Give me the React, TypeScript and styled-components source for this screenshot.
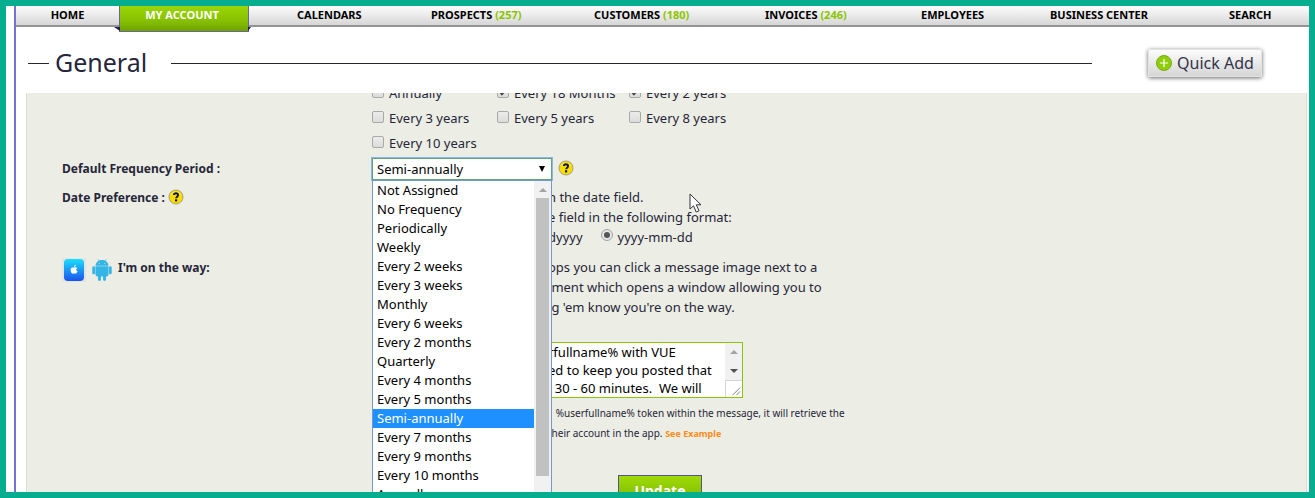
import React from 'react';
import styled, { createGlobalStyle } from 'styled-components';

const GlobalStyle = createGlobalStyle`
  *, *::before, *::after { box-sizing: border-box; }
  body { margin: 0; }
  body, button, select, textarea, input { font-family: "Noto Sans", "Open Sans", sans-serif; }
`;

const LEAD = 176;

const Frame = styled.div`
  height: 100vh;
  border: 6px solid #06ae8f;
  padding-left: 8px;
  overflow: hidden;
  background: #fff;
  color: #26263a;
`;

const Page = styled.div`
  height: 100%;
  display: flex;
  flex-direction: column;
  border-left: 2px solid #7274d0;
`;

const Nav = styled.nav`
  flex: none;
  height: 21px;
  display: grid;
  grid-template-columns: 103fr 130fr 134fr 163fr 171fr 156fr 129fr 179fr 128fr;
  align-items: start;
  border-bottom: 2px solid #939393;
  background: linear-gradient(#fdfdfd, #d6d6d6);
`;

const NavLink = styled.a<{ $centered?: boolean }>`
  line-height: 18px;
  padding-left: ${p => (p.$centered ? 0 : 48)}px;
  text-align: ${p => (p.$centered ? 'center' : 'left')};
  font-size: 11px;
  font-weight: 700;
  color: #000;
  text-decoration: none;
  white-space: nowrap;
`;

const Count = styled.span`
  color: #8cc400;
`;

const ActiveLink = styled(NavLink)`
  position: relative;
  height: 26px;
  padding-right: 4px;
  color: #fff;
  border: 1px solid #67679f;
  border-top: 0;
  background: linear-gradient(#9ad607, #86c000 60%, #72a300);
  &::before, &::after {
    content: "";
    position: absolute;
    top: 21px;
    border-top: 4px solid #201c55;
  }
  &::before { right: 100%; border-left: 6px solid transparent; }
  &::after { left: 100%; border-right: 3px solid transparent; }
`;

const Header = styled.header`
  flex: none;
  height: 66px;
  padding: 6px 47px 0 12px;
  display: flex;
  align-items: center;
`;

const Dash = styled.span`
  width: 21px;
  height: 1px;
  background: #26263a;
`;

const Title = styled.h1`
  margin: 0 24px 2px 6px;
  font-size: 25px;
  font-weight: 400;
  line-height: 32px;
`;

const Rule = styled.span`
  flex: 1;
  height: 1px;
  margin-right: 56px;
  background: #26263a;
`;

const QuickAdd = styled.button`
  width: 114px;
  height: 28px;
  padding: 0;
  display: flex;
  align-items: center;
  justify-content: center;
  gap: 5px;
  border: 1px solid #e3e3e3;
  border-radius: 2px;
  background: linear-gradient(#fcfcfc, #d5d5d5);
  box-shadow: 0 1px 4px rgba(0, 0, 0, 0.6);
  color: #33334a;
  font-size: 16px;
  white-space: nowrap;
`;

const Panel = styled.main`
  flex: 1;
  min-height: 0;
  overflow: hidden;
  margin: 0 2px 0 10px;
  border: solid #dadddc;
  border-width: 0 1px;
  background: #ecede4;
`;

const Form = styled.form`
  margin-top: -13px;
  padding-left: 35px;
  font-size: 13px;
  line-height: 20px;
`;

const Row = styled.div<{ $gap?: number }>`
  display: grid;
  grid-template-columns: 310px 1fr;
  margin-top: ${p => p.$gap ?? 0}px;
`;

const RowTitle = styled.div`
  display: flex;
  align-items: center;
  height: 22px;
  font-size: 12px;
  font-weight: 700;
`;

const PeriodTitle = styled(RowTitle)`
  height: 26px;
`;

const Checks = styled.div`
  grid-column: 2;
  display: grid;
  grid-template-columns: 125px 132px 1fr;
  grid-auto-rows: 25px;
`;

const Option = styled.label`
  display: flex;
  align-items: center;
  gap: 5px;
`;

const Tick = styled.input`
  appearance: none;
  display: grid;
  place-items: center;
  width: 12px;
  height: 12px;
  margin: 0 0 2px;
  border: 1px solid #a9a9a9;
  border-radius: 2px;
  background: linear-gradient(#ececea, #dcdcda);
  &:checked::before {
    content: "";
    width: 4px;
    height: 7px;
    margin-bottom: 1px;
    border: solid #4a4a4a;
    border-width: 0 2px 2px 0;
    transform: rotate(45deg);
  }
`;

const Radio = styled.input`
  appearance: none;
  display: grid;
  place-items: center;
  width: 12px;
  height: 12px;
  margin: 0 0 4px;
  border: 1px solid #a3a3a3;
  border-radius: 50%;
  background: #e6e6e4;
  &:checked::before {
    content: "";
    width: 6px;
    height: 6px;
    border-radius: 50%;
    background: #555;
  }
`;

const SelectLine = styled.div`
  display: flex;
  align-items: center;
  gap: 6px;
  padding-top: 2px;
  height: 27px;
  padding-bottom: 3px;
`;

const Picker = styled.div`
  position: relative;
  width: 180px;
  height: 22px;
`;

const Select = styled.select`
  appearance: none;
  width: 100%;
  height: 100%;
  padding: 0 4px;
  border: 1px solid #5fa777;
  border-radius: 0;
  outline: 1px solid #8db5ea;
  background: #fff;
  color: #000;
  font-size: 13px;
`;

const Caret = styled.svg`
  position: absolute;
  right: 7px;
  top: 8px;
  pointer-events: none;
`;

const Menu = styled.div`
  position: absolute;
  z-index: 2;
  top: 22px;
  left: 0;
  width: 180px;
  height: 340px;
  display: flex;
  border: 1px solid #7597d6;
  background: #fff;
  color: #000;
  line-height: 19px;
`;

const MenuList = styled.ul`
  flex: 1;
  margin: 0;
  padding: 0;
  list-style: none;
  overflow: hidden;
`;

const MenuItem = styled.li<{ $selected: boolean }>`
  padding-left: 4px;
  color: ${p => (p.$selected ? '#fff' : '#000')};
  background: ${p => (p.$selected ? '#1e90ff' : 'transparent')};
`;

const MenuScroll = styled.div`
  width: 17px;
  padding: 7px 2px 0;
  display: flex;
  flex-direction: column;
  align-items: center;
  gap: 6px;
  background: #f1f1f1;
`;

const Thumb = styled.div`
  width: 13px;
  height: 278px;
  background: #c1c1c1;
`;

const Copy = styled.div`
  padding-left: ${LEAD}px;
  white-space: pre;
`;

const FormatLine = styled.div`
  display: flex;
  gap: 18px;
`;

const MessageBox = styled.div`
  display: flex;
  width: 371px;
  height: 56px;
  border: 1px solid #8cc400;
  background: #fff;
`;

const Message = styled.textarea`
  flex: 1;
  min-width: 0;
  padding: 0 0 0 ${LEAD - 1}px;
  border: 0;
  outline: 0;
  resize: none;
  overflow: hidden;
  background: transparent;
  color: #000;
  font-size: 13px;
  line-height: 18px;
  white-space: pre;
`;

const MessageScroll = styled.div`
  width: 17px;
  display: flex;
  flex-direction: column;
  background: #f1f1f1;
`;

const Arrows = styled.div`
  flex: 1;
  padding: 7px 0 7px;
  display: flex;
  flex-direction: column;
  align-items: center;
  justify-content: space-between;
`;

const Grip = styled.svg`
  border: solid #d4d4d4;
  border-width: 1px 0 0 1px;
  background: #fff;
`;

const Hint = styled(Copy)`
  padding-top: 5px;
  font-size: 10px;
`;

const Example = styled.a`
  color: #ff8c1a;
  font-size: 9px;
  font-weight: 700;
  text-decoration: none;
`;

const Update = styled.button`
  width: 84px;
  height: 30px;
  margin: 31px 0 0 246px;
  padding: 0;
  border: 1px solid #55558c;
  background: linear-gradient(#9edb08, #7db400);
  color: #fff;
  font-size: 14px;
  font-weight: 700;
`;

const Apps = styled.span`
  display: flex;
  align-items: center;
  gap: 6px;
  margin: 3px 6px 0 0;
`;

const HelpSpot = styled.span`
  display: flex;
  margin: 0 0 3px 3px;
`;

const SelectHelp = styled(HelpSpot)`
  margin-left: 0;
`;

const Pointer = styled.svg`
  position: absolute;
  left: 689px;
  top: 193px;
  z-index: 3;
`;

const Help = () => (
  <svg width="16" height="16" viewBox="0 0 16 16" role="img" aria-label="Help">
    <circle cx="8" cy="8" r="7" fill="#f8dc00" stroke="#a8a07a" />
    <path d="M3 6a5.4 5.4 0 0 1 10 0Q8 3.600 3 6z" fill="#fff27a" />
    <path d="M5.900 6.100C5.900 3.700 10.100 3.700 10.100 6.100C10.100 7.700 8.100 7.600 8.100 9.300" fill="none" stroke="#161616" strokeWidth="1.900" />
    <rect x="7" y="10.300" width="2.200" height="2.100" fill="#161616" />
  </svg>
);

const AppleBadge = () => (
  <svg width="24" height="24" viewBox="0 0 24 24" role="img" aria-label="iOS app">
    <defs>
      <linearGradient id="ios" x1="0" y1="0" x2="0" y2="1">
        <stop offset="0" stopColor="#1ae0fb" />
        <stop offset="1" stopColor="#1a52ee" />
      </linearGradient>
    </defs>
    <rect width="24" height="24" fill="#e2e4e2" />
    <rect x="2" y="1" width="20" height="22" rx="4" fill="url(#ios)" />
    <path d="M12.300 9.600c.9-.5 2.100-.6 2.900.3-1.300.9-1.200 2.700.3 3.400-.5 1.400-1.500 2.700-2.500 2.300-.7-.3-1.200-.3-1.900 0-1.800.6-3.600-4.600-1.500-5.900.9-.5 1.700-.3 2.700-.1zM12.100 9c-.1-1.200.7-2 1.700-2.300.1 1.200-.6 2.200-1.700 2.300z" fill="#fff" />
  </svg>
);

const AndroidBadge = () => (
  <svg width="20" height="24" viewBox="0 0 20 24" role="img" aria-label="Android app">
    <g fill="#33b5e5">
      <path d="M3.500 7.800C4 .2 16 .2 16.500 7.800z" />
      <path d="M3.500 8.300h13V16.500q0 2-2 2h-9Q3.500 18.500 3.500 16.500z" />
      <rect x="0.300" y="8.300" width="2.800" height="8" rx="1.400" />
      <rect x="16.900" y="8.300" width="2.800" height="8" rx="1.400" />
      <rect x="6" y="16" width="2.900" height="7" rx="1.400" />
      <rect x="11.100" y="16" width="2.900" height="7" rx="1.400" />
    </g>
    <path d="M6.800 3.200L5.900 1M13.200 3.200L14.100 1" stroke="#7cc4dd" strokeWidth="0.800" />
    <circle cx="7.200" cy="5.200" r="0.500" fill="#ecede4" />
    <circle cx="12.800" cy="5.200" r="0.500" fill="#ecede4" />
  </svg>
);

const Triangle = ({ down = false, color }: { down?: boolean; color: string }) => (
  <svg width="8" height="4" viewBox="0 0 8 4" aria-hidden="true">
    <path d={down ? 'M0 0h8L4 4z' : 'M0 4h8L4 0z'} fill={color} />
  </svg>
);

const FREQUENCIES = [
  { label: 'Annually', on: false },
  { label: 'Every 18 Months', on: true },
  { label: 'Every 2 years', on: true },
  { label: 'Every 3 years', on: false },
  { label: 'Every 5 years', on: false },
  { label: 'Every 8 years', on: false },
  { label: 'Every 10 years', on: false },
];

const PERIODS = [
  'Not Assigned', 'No Frequency', 'Periodically', 'Weekly', 'Every 2 weeks', 'Every 3 weeks',
  'Monthly', 'Every 6 weeks', 'Every 2 months', 'Quarterly', 'Every 4 months', 'Every 5 months',
  'Semi-annually', 'Every 7 months', 'Every 9 months', 'Every 10 months', 'Annually',
];

const MESSAGE = 'rfullname% with VUE\ned to keep you posted that\n  30 - 60 minutes.  We will';

export default function App() {
  return (
    <Frame>
      <GlobalStyle />
      <Page>
        <Nav>
          <NavLink href="#home" $centered>HOME</NavLink>
          <ActiveLink href="#account" $centered>MY ACCOUNT</ActiveLink>
          <NavLink href="#calendars">CALENDARS</NavLink>
          <NavLink href="#prospects">PROSPECTS <Count>(257)</Count></NavLink>
          <NavLink href="#customers">CUSTOMERS <Count>(180)</Count></NavLink>
          <NavLink href="#invoices">INVOICES <Count>(246)</Count></NavLink>
          <NavLink href="#employees">EMPLOYEES</NavLink>
          <NavLink href="#business">BUSINESS CENTER</NavLink>
          <NavLink href="#search">SEARCH</NavLink>
        </Nav>
        <Header>
          <Dash />
          <Title>General</Title>
          <Rule />
          <QuickAdd type="button">
            <svg width="16" height="16" viewBox="0 0 16 16" aria-hidden="true">
              <circle cx="8" cy="8" r="7.500" fill="#8fce0c" stroke="#79ab10" />
              <path d="M8 4v8M4 8h8" stroke="#fff" strokeWidth="1.200" />
            </svg>
            Quick Add
          </QuickAdd>
        </Header>
        <Panel>
          <Form>
            <Row>
              <Checks>
                {FREQUENCIES.map(f => (
                  <Option key={f.label}>
                    <Tick type="checkbox" defaultChecked={f.on} />
                    {f.label}
                  </Option>
                ))}
              </Checks>
            </Row>
            <Row $gap={1}>
              <PeriodTitle as="label" htmlFor="period">Default Frequency Period :</PeriodTitle>
              <SelectLine>
                <Picker>
                  <Select id="period" defaultValue="Semi-annually">
                    {PERIODS.map(p => <option key={p}>{p}</option>)}
                  </Select>
                  <Caret width="6" height="6" viewBox="0 0 6 6" aria-hidden="true">
                    <path d="M0 0h6L3 6z" fill="#000" />
                  </Caret>
                  <Menu>
                    <MenuList role="listbox" aria-label="Default Frequency Period">
                      {PERIODS.map(p => (
                        <MenuItem
                          key={p}
                          role="option"
                          aria-selected={p === 'Semi-annually'}
                          $selected={p === 'Semi-annually'}
                        >
                          {p}
                        </MenuItem>
                      ))}
                    </MenuList>
                    <MenuScroll>
                      <Triangle color="#a3a3a3" />
                      <Thumb />
                    </MenuScroll>
                  </Menu>
                </Picker>
                <SelectHelp><Help /></SelectHelp>
              </SelectLine>
            </Row>
            <Row $gap={4}>
              <RowTitle>Date Preference :<HelpSpot><Help /></HelpSpot></RowTitle>
              <Copy>
                <div>n the date field.</div>
                <div>e field in the following format:</div>
                <FormatLine>
                  <span>dyyyy</span>
                  <Option>
                    <Radio type="radio" name="format" defaultChecked />
                    yyyy-mm-dd
                  </Option>
                </FormatLine>
              </Copy>
            </Row>
            <Row $gap={10}>
              <RowTitle><Apps><AppleBadge /><AndroidBadge /></Apps>I'm on the way:</RowTitle>
              <Copy>
                <div>ops you can click a message image next to a</div>
                <div>{' ment which opens a window allowing you to'}</div>
                <div>{" g 'em know you're on the way."}</div>
              </Copy>
            </Row>
            <Row $gap={25}>
              <span />
              <div>
                <MessageBox>
                  <Message aria-label="Message" wrap="off" defaultValue={MESSAGE} />
                  <MessageScroll>
                    <Arrows>
                      <Triangle color="#a3a3a3" />
                      <Triangle down color="#505050" />
                    </Arrows>
                    <Grip width="17" height="17" viewBox="0 0 17 17" aria-hidden="true">
                      <path d="M7 15L15 7M11 15L15 11" stroke="#777" />
                    </Grip>
                  </MessageScroll>
                </MessageBox>
                <Hint>
                  <div>{'   %userfullname% token within the message, it will retrieve the'}</div>
                  <div>their account in the app. <Example href="#example">See Example</Example></div>
                </Hint>
                <Update type="button">Update</Update>
              </div>
            </Row>
          </Form>
        </Panel>
      </Page>
      <Pointer width="13" height="21" viewBox="0 0 13 21" aria-hidden="true">
        <path d="M1 1V16L4.500 12.800L7.200 19L10 17.800L7.300 11.800H12z" fill="#fff" stroke="#33333f" />
      </Pointer>
    </Frame>
  );
}
